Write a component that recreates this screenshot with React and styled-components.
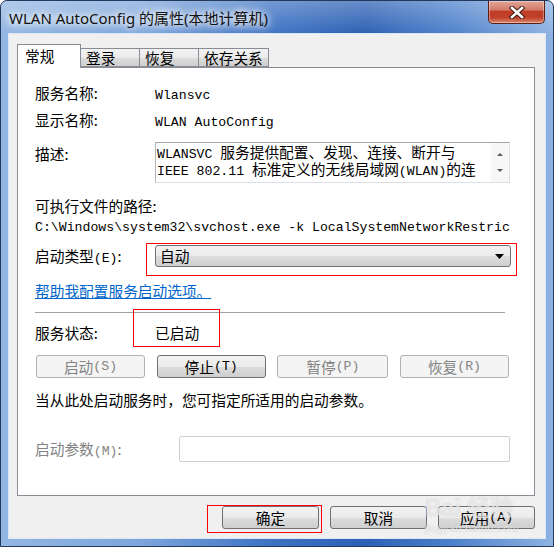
import styled, { createGlobalStyle } from "styled-components";

const Global = createGlobalStyle`
  html, body {
    margin: 0;
    padding: 0;
    background: #ffffff;
  }
  body {
    font-family: "Noto Sans CJK SC", "Noto Sans", sans-serif;
    font-size: 14.7px;
    color: #000;
  }
`;

const Window = styled.div`
  position: relative;
  box-sizing: border-box;
  width: 554px;
  height: 547px;
  display: flex;
  flex-direction: column;
  padding: 0 7px 7px;
  border: 1px solid #22395c;
  border-radius: 7px 7px 0 0;
  overflow: hidden;
  background:
    linear-gradient(to bottom, rgba(255, 255, 255, 0.28), rgba(255, 255, 255, 0) 34px),
    linear-gradient(
      to right,
      #93b6e3 0%,
      #7ea6dc 25%,
      #3f74c4 48%,
      #2c60b4 66%,
      #4f82cb 82%,
      #8fb2e2 100%
    );
`;

const TitleBar = styled.div`
  flex-shrink: 0;
  height: 32px;
  display: flex;
  align-items: flex-start;
  justify-content: space-between;
`;

const Title = styled.div`
  padding: 7px 0 0 1px;
  font-family: "Noto Sans", "Noto Sans CJK SC", sans-serif;
  font-size: 15px;
  line-height: 20px;
  color: #111;
  text-shadow: 0 0 6px #fff, 0 0 10px rgba(255, 255, 255, 0.9), 0 0 14px rgba(255, 255, 255, 0.7);
`;

const CloseButton = styled.div`
  width: 57px;
  height: 23px;
  box-sizing: border-box;
  margin-right: 1px;
  border: 1px solid #5b1d14;
  border-top: none;
  border-radius: 0 0 5px 5px;
  background: linear-gradient(
    to bottom,
    #e3a89a 0%,
    #d27a67 40%,
    #bf3c25 48%,
    #c0412a 75%,
    #dc8a6e 100%
  );
  box-shadow: inset 0 0 0 1px rgba(255, 255, 255, 0.35);
  display: flex;
  align-items: center;
  justify-content: center;
`;

const Client = styled.div`
  flex: 1;
  box-sizing: border-box;
  background: #f0f0f0;
  border: 1px solid #dce7f5;
  padding: 10px 0 0 8px;
  display: flex;
  flex-direction: column;
`;

const TabBar = styled.div`
  position: relative;
  z-index: 1;
  flex-shrink: 0;
  height: 23px;
  display: flex;
  align-items: flex-end;
`;

const Tab = styled.div`
  box-sizing: border-box;
  width: ${(p) => p.$w}px;
  height: ${(p) => (p.$active ? 24 : 19)}px;
  margin-bottom: ${(p) => (p.$active ? -1 : 0)}px;
  margin-left: ${(p) => (p.$active ? 0 : -1)}px;
  padding-left: ${(p) => (p.$active ? 7 : 5)}px;
  border: 1px solid #898c95;
  border-bottom: ${(p) => (p.$active ? "none" : "1px solid #898c95")};
  background: ${(p) =>
    p.$active ? "#ffffff" : "linear-gradient(to bottom, #f2f2f2 0%, #ebebeb 50%, #dddddd 51%, #cfcfcf 100%)"};
  line-height: ${(p) => (p.$active ? 22 : 17)}px;
  white-space: nowrap;
`;

const Panel = styled.div`
  box-sizing: border-box;
  flex-shrink: 0;
  width: 518px;
  height: 429px;
  border: 1px solid #898c95;
  background: #ffffff;
  padding: 16px 24px 0 17px;
  display: flex;
  flex-direction: column;
`;

const Row = styled.div`
  display: flex;
  align-items: ${(p) => p.$align || "center"};
  margin-top: ${(p) => p.$mt || 0}px;
  min-height: 18px;
  line-height: 18px;
`;

const Label = styled.div`
  flex-shrink: 0;
  width: ${(p) => p.$w || 120}px;
  padding-top: ${(p) => p.$pt || 0}px;
  color: ${(p) => (p.$disabled ? "#838383" : "#000")};
  white-space: nowrap;
`;

const Text = styled.div`
  white-space: nowrap;
`;

const PathText = styled.div`
  width: 475px;
  white-space: nowrap;
  overflow: hidden;
`;

const Mono = styled.span`
  font-family: "Liberation Mono", monospace;
  font-size: 13.2px;
  line-height: 0;
`;

const TextBox = styled.div`
  position: relative;
  box-sizing: border-box;
  width: 355px;
  height: 41px;
  border: 1px solid #dbdfe6;
  border-top-color: #a6a6a6;
  border-left-color: #b5b5b5;
  padding: 0 20px 0 1px;
  line-height: 17px;
  white-space: nowrap;
  overflow: hidden;
`;

const ScrollBar = styled.div`
  position: absolute;
  top: 0;
  right: 0;
  bottom: 0;
  width: 18px;
  background: #f7f7f7;
  display: flex;
  flex-direction: column;
  align-items: center;
  justify-content: space-around;
  padding: 3px 0;
  box-sizing: border-box;
`;

const Arrow = styled.div`
  width: 0;
  height: 0;
  border-left: 3px solid transparent;
  border-right: 3px solid transparent;
  ${(p) => (p.$up ? "border-bottom: 3px solid #5c5c5c;" : "border-top: 3px solid #5c5c5c;")}
`;

const Marked = styled.div`
  position: relative;
  &::after {
    content: "";
    position: absolute;
    top: ${(p) => p.$t}px;
    left: ${(p) => p.$l}px;
    right: ${(p) => p.$r}px;
    bottom: ${(p) => p.$b}px;
    border: 1px solid #ff0000;
    pointer-events: none;
  }
`;

const Combo = styled.div`
  box-sizing: border-box;
  width: 356px;
  height: 22px;
  border: 1px solid #707070;
  border-radius: 3px;
  background: linear-gradient(to bottom, #f2f2f2 0%, #ebebeb 50%, #dddddd 51%, #cfcfcf 100%);
  display: flex;
  align-items: center;
  justify-content: space-between;
  padding: 0 6px 0 4px;
`;

const Link = styled.a`
  color: #0066cc;
  text-decoration: underline;
  cursor: pointer;
`;

const Separator = styled.div`
  flex-shrink: 0;
  width: 470px;
  height: 1px;
  margin-top: 12px;
  background: #a0a0a0;
`;

const ButtonRow = styled.div`
  display: flex;
  justify-content: space-between;
  width: 473px;
  margin: 13px 0 0 1px;
`;

const Button = styled.div`
  box-sizing: border-box;
  width: ${(p) => p.$w || 110}px;
  height: 23px;
  border: 1px solid ${(p) => (p.$disabled ? "#adb2b5" : "#707070")};
  border-radius: 3px;
  background: ${(p) =>
    p.$disabled
      ? "#f4f4f4"
      : "linear-gradient(to bottom, #f2f2f2 0%, #ebebeb 50%, #dddddd 51%, #cfcfcf 100%)"};
  color: ${(p) => (p.$disabled ? "#838383" : "#000")};
  display: flex;
  align-items: center;
  justify-content: center;
  line-height: 18px;
  white-space: nowrap;
`;

const Input = styled.div`
  box-sizing: border-box;
  width: 331px;
  height: 26px;
  border: 1px solid #cfcfcf;
  border-radius: 2px;
  background: #fff;
`;

const Footer = styled.div`
  display: flex;
  justify-content: flex-end;
  gap: 11px;
  width: 518px;
  margin-top: 10px;
`;

const Watermark = styled.div`
  position: absolute;
  left: 424px;
  top: 496px;
  pointer-events: none;
  color: rgba(255, 255, 255, 0.6);
  text-shadow: 0 0 1px rgba(140, 140, 140, 0.45);
  font-family: "Liberation Sans", "Noto Sans CJK SC", sans-serif;
  display: flex;
  flex-direction: column;
  align-items: flex-start;
  line-height: 1;
`;

const WatermarkLogo = styled.div`
  font-size: 23px;
  font-weight: bold;
`;

const WatermarkUrl = styled.div`
  font-size: 11px;
  margin-top: 3px;
  letter-spacing: 0.3px;
`;

const CloseIcon = () => (
  <svg width="16" height="13" viewBox="0 0 16 13">
    <path d="M3 2 L13 11 M13 2 L3 11" stroke="#3a1a14" strokeWidth="4.5" strokeLinecap="square" />
    <path d="M3 2 L13 11 M13 2 L3 11" stroke="#ffffff" strokeWidth="2.6" strokeLinecap="square" />
  </svg>
);

const DropArrow = () => (
  <svg width="9" height="5" viewBox="0 0 9 5">
    <path d="M0 0 H9 L4.5 5 Z" fill="#000" />
  </svg>
);

const App = () => {
  return (
    <>
      <Global />
      <Window>
        <TitleBar>
          <Title>WLAN AutoConfig 的属性(本地计算机)</Title>
          <CloseButton>
            <CloseIcon />
          </CloseButton>
        </TitleBar>
        <Client>
          <TabBar>
            <Tab $active $w={64}>常规</Tab>
            <Tab $w={60}>登录</Tab>
            <Tab $w={60}>恢复</Tab>
            <Tab $w={71}>依存关系</Tab>
          </TabBar>
          <Panel>
            <Row>
              <Label>服务名称:</Label>
              <Text>
                <Mono>Wlansvc</Mono>
              </Text>
            </Row>
            <Row $mt={9}>
              <Label>显示名称:</Label>
              <Text>
                <Mono>WLAN AutoConfig</Mono>
              </Text>
            </Row>
            <Row $mt={13} $align="flex-start">
              <Label $pt={3}>描述:</Label>
              <TextBox>
                <div>
                  <Mono>WLANSVC </Mono>服务提供配置、发现、连接、断开与
                </div>
                <div>
                  <Mono>IEEE 802.11 </Mono>标准定义的无线局域网<Mono>(WLAN)</Mono>的连
                </div>
                <ScrollBar>
                  <Arrow $up />
                  <Arrow />
                </ScrollBar>
              </TextBox>
            </Row>
            <Row $mt={14}>
              <Text>可执行文件的路径:</Text>
            </Row>
            <Row $mt={1}>
              <PathText>
                <Mono>C:\Windows\system32\svchost.exe -k LocalSystemNetworkRestricted</Mono>
              </PathText>
            </Row>
            <Row $mt={11}>
              <Label>
                启动类型<Mono>(E)</Mono>:
              </Label>
              <Marked $t={-2} $l={-9} $r={-6} $b={-9}>
                <Combo>
                  <span>自动</span>
                  <DropArrow />
                </Combo>
              </Marked>
            </Row>
            <Row $mt={15}>
              <Link>帮助我配置服务启动选项。</Link>
            </Row>
            <Separator />
            <Row $mt={11}>
              <Label>服务状态:</Label>
              <Marked $t={-15} $l={-22} $r={-21} $b={-5}>
                <Text>已启动</Text>
              </Marked>
            </Row>
            <ButtonRow>
              <Button $disabled $w={109}>
                启动<Mono>(S)</Mono>
              </Button>
              <Button $w={109}>
                停止<Mono>(T)</Mono>
              </Button>
              <Button $disabled $w={111}>
                暂停<Mono>(P)</Mono>
              </Button>
              <Button $disabled $w={109}>
                恢复<Mono>(R)</Mono>
              </Button>
            </ButtonRow>
            <Row $mt={13}>
              <Text>当从此处启动服务时，您可指定所适用的启动参数。</Text>
            </Row>
            <Row $mt={27}>
              <Label $w={144} $disabled>
                启动参数<Mono>(M)</Mono>:
              </Label>
              <Input />
            </Row>
          </Panel>
          <Footer>
            <Marked $t={-1} $l={-15} $r={-3} $b={-4}>
              <Button $w={97}>确定</Button>
            </Marked>
            <Button $w={97}>取消</Button>
            <Button $w={97}>
              应用<Mono>(A)</Mono>
            </Button>
          </Footer>
        </Client>
        <Watermark>
          <WatermarkLogo>Bai 经验</WatermarkLogo>
          <WatermarkUrl>jingyan.baidu.com</WatermarkUrl>
        </Watermark>
      </Window>
    </>
  );
};

export default App;
